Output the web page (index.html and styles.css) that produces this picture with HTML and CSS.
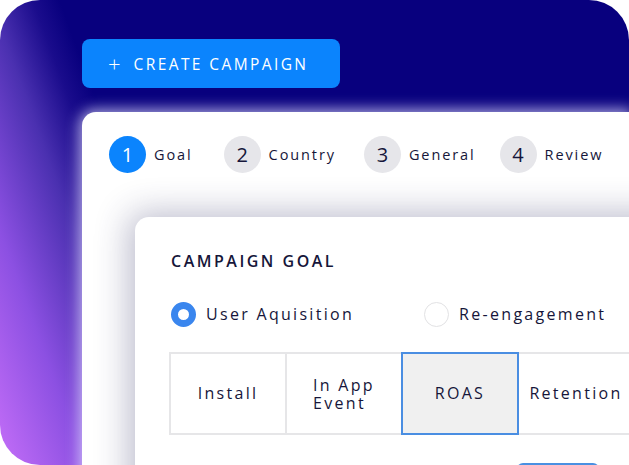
FILE: index.html
```html
<!DOCTYPE html>
<html lang="en">
<head>
<meta charset="utf-8">
<title>Create Campaign</title>
<link rel="stylesheet" href="styles.css">
</head>
<body>
<div class="frame">
  <button class="create-btn"><span class="plus">+</span>CREATE CAMPAIGN</button>
  <div class="panel">
    <div class="steps">
      <div class="step active"><span class="num">1</span><span class="label">Goal</span></div>
      <div class="step"><span class="num">2</span><span class="label">Country</span></div>
      <div class="step"><span class="num">3</span><span class="label">General</span></div>
      <div class="step"><span class="num">4</span><span class="label">Review</span></div>
    </div>
    <div class="card">
      <h2 class="title">CAMPAIGN GOAL</h2>
      <div class="radios">
        <label class="radio checked"><span class="dot"></span>User Aquisition</label>
        <label class="radio"><span class="dot"></span>Re-engagement</label>
      </div>
      <div class="tiles">
        <div class="tile">Install</div>
        <div class="tile"><span class="tile-lines"><span>In App</span><span>Event</span></span></div>
        <div class="tile selected">ROAS</div>
        <div class="tile">Retention</div>
      </div>
      <div class="actions"><span class="next"></span></div>
    </div>
  </div>
</div>
</body>
</html>
```

FILE: styles.css
```css
* { box-sizing: border-box; }
html, body { margin: 0; padding: 0; background: #ffffff; }
body { font-family: "Open Sans", "Noto Sans", sans-serif; color: #16163a; }

.frame {
  width: 629px;
  height: 465px;
  overflow: hidden;
  border-radius: 40px 40px 0 40px;
  padding: 39px 0 0 82px;
  background: linear-gradient(70deg, #c46ef8 0px, #8c50e2 80px, #4a30b0 150px, #1a0c8c 190px, #08007e 215px);
}

.create-btn {
  display: flex;
  align-items: center;
  width: 258px;
  height: 49px;
  border: none;
  border-radius: 8px;
  background: #0b84fd;
  color: #ffffff;
  font-family: "Open Sans", sans-serif;
  font-size: 15.5px;
  font-weight: 500;
  letter-spacing: 2.4px;
  padding: 0 0 0 26px;
}
.plus { font-size: 22px; font-weight: 300; margin-right: 13px; line-height: 1; margin-top: -2px; letter-spacing: 0; }

.panel {
  margin-top: 24px;
  height: 400px;
  background: #ffffff;
  border-radius: 14px 0 0 0;
  padding: 24px 0 0 27px;
  box-shadow: 0 0 14px 3px rgba(225, 220, 255, 0.75);
}

.steps { display: flex; align-items: center; }
.step { display: flex; align-items: center; }
.step:nth-child(1) { margin-right: 31px; }
.step:nth-child(2) { margin-right: 28px; }
.step:nth-child(3) { margin-right: 24px; }
.num {
  width: 37px; height: 37px; border-radius: 50%;
  background: #e6e6ea;
  display: flex; align-items: center; justify-content: center;
  font-size: 20px; font-weight: 500; color: #16163a;
  margin-right: 8px;
}
.step.active .num { background: #0b84fd; color: #ffffff; }
.label { font-size: 14.5px; font-weight: 500; letter-spacing: 1.9px; color: #16163a; margin-top: -1px; }

.card {
  margin: 44px 0 0 26px;
  width: 560px;
  height: 300px;
  background: #ffffff;
  border-radius: 14px 0 0 0;
  padding: 33px 0 0 36px;
  box-shadow: -6px -4px 34px rgba(45, 45, 95, 0.32);
}

.title {
  margin: 0;
  font-size: 16px;
  font-weight: 600;
  letter-spacing: 2.5px;
  line-height: 22px;
  color: #16163a;
}

.radios { display: flex; margin-top: 29px; height: 26px; align-items: center; }
.radio {
  display: flex; align-items: center;
  font-size: 16px; font-weight: 500; letter-spacing: 2.3px; color: #16163a;
}
.radio:first-child { margin-right: 70px; }
.dot {
  width: 25px; height: 25px; border-radius: 50%;
  border: 1.5px solid #e2e2e4;
  margin-right: 10px;
}
.radio.checked .dot { border: 7.5px solid #3a86ee; }

.tiles {
  display: grid;
  grid-template-columns: repeat(4, 116px);
  margin-top: 25px;
  margin-left: -2px;
}
.tile {
  width: 118px;
  height: 83px;
  display: flex; align-items: center; justify-content: center;
  border: 2px solid #e6e6e8;
  font-size: 16px; font-weight: 500; letter-spacing: 2.3px; line-height: 19px;
  color: #16163a;
  text-align: left;
}
.tile-lines { display: flex; flex-direction: column; line-height: 18px; }
.tile.selected { background: #f0f0f0; border-color: #4a8ee2; position: relative; z-index: 1; }

.actions { display: flex; margin-top: 28px; padding-left: 346px; }
.next { width: 82px; height: 40px; border-radius: 6px; background: #4a90e2; }
```
